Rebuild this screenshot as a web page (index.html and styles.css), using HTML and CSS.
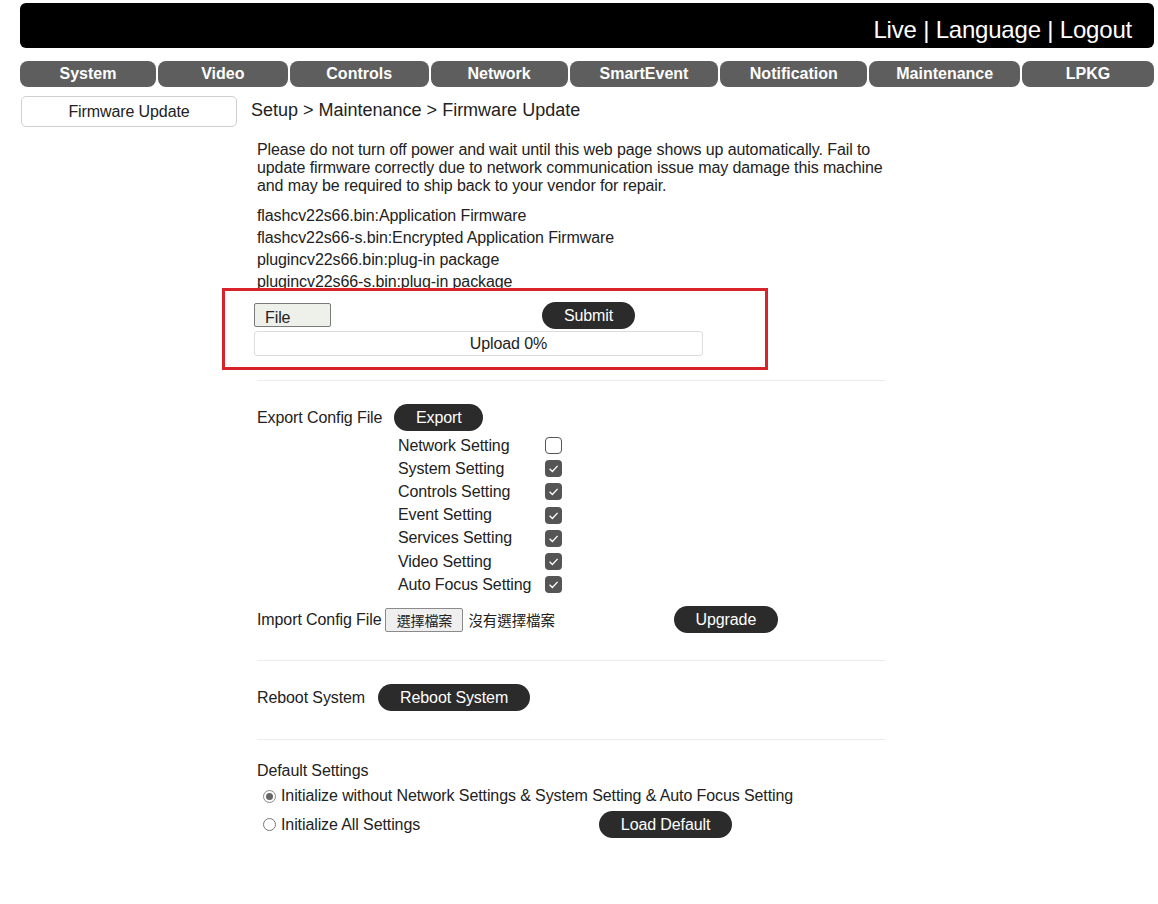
FILE: index.html
```html
<!DOCTYPE html>
<html>
<head>
<meta charset="utf-8">
<title>Firmware Update</title>
<link rel="stylesheet" href="styles.css">
</head>
<body>
<div class="page">
  <header class="topbar">
    <span class="toplinks">Live | Language | Logout</span>
  </header>
  <nav class="tabs">
    <a class="tab t1">System</a>
    <a class="tab t2">Video</a>
    <a class="tab t3">Controls</a>
    <a class="tab t4">Network</a>
    <a class="tab t5">SmartEvent</a>
    <a class="tab t6">Notification</a>
    <a class="tab t7">Maintenance</a>
    <a class="tab t8">LPKG</a>
  </nav>
  <div class="main">
    <aside class="side">
      <div class="side-item">Firmware Update</div>
    </aside>
    <section class="panel">
      <div class="crumb">Setup &gt; Maintenance &gt; Firmware Update</div>
      <div class="content">
        <p class="warn">Please do not turn off power and wait until this web page shows up automatically. Fail to update firmware correctly due to network communication issue may damage this machine and may be required to ship back to your vendor for repair.</p>
        <ul class="files">
          <li>flashcv22s66.bin:Application Firmware</li>
          <li>flashcv22s66-s.bin:Encrypted Application Firmware</li>
          <li>plugincv22s66.bin:plug-in package</li>
          <li>plugincv22s66-s.bin:plug-in package</li>
        </ul>
        <div class="upload">
          <div class="upload-row">
            <span class="file-btn">File</span>
            <span class="btn submit">Submit</span>
          </div>
          <div class="progress">Upload 0%</div>
          <div class="highlight"></div>
        </div>
        <hr class="sep sep1">
        <div class="row export-row">
          <span class="label">Export Config File</span>
          <span class="btn export">Export</span>
        </div>
        <div class="checks">
          <span class="ck-label">Network Setting</span><span class="ck"></span>
          <span class="ck-label">System Setting</span><span class="ck on"><svg viewBox="0 0 17 17"><path d="M4.6 8.7l2.8 2.8 5.2-5.6" fill="none" stroke="#fff" stroke-width="1.3"/></svg></span>
          <span class="ck-label">Controls Setting</span><span class="ck on"><svg viewBox="0 0 17 17"><path d="M4.6 8.7l2.8 2.8 5.2-5.6" fill="none" stroke="#fff" stroke-width="1.3"/></svg></span>
          <span class="ck-label">Event Setting</span><span class="ck on"><svg viewBox="0 0 17 17"><path d="M4.6 8.7l2.8 2.8 5.2-5.6" fill="none" stroke="#fff" stroke-width="1.3"/></svg></span>
          <span class="ck-label">Services Setting</span><span class="ck on"><svg viewBox="0 0 17 17"><path d="M4.6 8.7l2.8 2.8 5.2-5.6" fill="none" stroke="#fff" stroke-width="1.3"/></svg></span>
          <span class="ck-label">Video Setting</span><span class="ck on"><svg viewBox="0 0 17 17"><path d="M4.6 8.7l2.8 2.8 5.2-5.6" fill="none" stroke="#fff" stroke-width="1.3"/></svg></span>
          <span class="ck-label">Auto Focus Setting</span><span class="ck on"><svg viewBox="0 0 17 17"><path d="M4.6 8.7l2.8 2.8 5.2-5.6" fill="none" stroke="#fff" stroke-width="1.3"/></svg></span>
        </div>
        <div class="row import-row">
          <span class="label">Import Config File</span>
          <span class="choose">選擇檔案</span>
          <span class="nofile">沒有選擇檔案</span>
          <span class="btn upgrade">Upgrade</span>
        </div>
        <hr class="sep sep2">
        <div class="row reboot-row">
          <span class="label">Reboot System</span>
          <span class="btn reboot">Reboot System</span>
        </div>
        <hr class="sep sep3">
        <div class="defaults-title">Default Settings</div>
        <div class="radio-row r1">
          <span class="radio on"></span>
          <span>Initialize without Network Settings &amp; System Setting &amp; Auto Focus Setting</span>
        </div>
        <div class="radio-row r2">
          <span class="radio"></span>
          <span>Initialize All Settings</span>
          <span class="btn loaddef">Load Default</span>
        </div>
      </div>
    </section>
  </div>
</div>
</body>
</html>
```
FILE: styles.css
```css
* { box-sizing: border-box; }
html, body { margin: 0; padding: 0; background: #fff; }
body {
  font-family: "Liberation Sans", Arial, sans-serif;
  font-size: 16px;
  letter-spacing: -0.1px;
  color: #222;
}
.page { padding: 3px 4px 0 20px; width: 1158px; }

.topbar {
  height: 45px;
  background: #000;
  border-radius: 6px;
  display: flex;
  justify-content: flex-end;
  align-items: center;
  padding-right: 22px;
}
.toplinks { color: #fff; font-size: 24px; letter-spacing: -0.2px; padding-top: 8px; }

.tabs {
  display: flex;
  gap: 2px;
  margin-top: 13px;
}
.tab {
  height: 26px;
  background: #5e5e5e;
  color: #fff;
  font-weight: bold;
  font-size: 16px;
  letter-spacing: 0;
  border-radius: 8px;
  display: flex;
  align-items: center;
  justify-content: center;
}
.t1 { width: 136px; }
.t2 { width: 130px; }
.t3 { width: 139px; }
.t4 { width: 137px; }
.t5 { width: 149px; }
.t6 { width: 147px; }
.t7 { width: 151px; }
.t8 { width: 132px; }

.main { display: flex; margin-top: 9px; }
.side { width: 231px; padding-left: 1px; }
.side-item {
  width: 216px;
  height: 31px;
  border: 1.5px solid #cfcfcf;
  border-radius: 5px;
  display: flex;
  align-items: center;
  justify-content: center;
  font-size: 16px;
  color: #222;
}
.panel { flex: 1; }
.crumb { font-size: 18px; line-height: 28px; color: #222; letter-spacing: 0; }
.content { padding-left: 6px; width: 636px; }

.warn { margin: 17px 0 0; line-height: 18px; font-size: 16px; }
.files { list-style: none; margin: 10px 0 0; padding: 0; }
.files li { line-height: 22px; }

.upload { position: relative; margin-left: -3px; margin-top: 9px; }
.upload-row { display: flex; align-items: flex-start; height: 27px; }
.file-btn {
  margin-top: 1px;
  width: 77px;
  height: 24px;
  background: #eef0ea;
  border: 1px solid #7a7a7a;
  border-radius: 2px;
  padding: 4px 0 0 10px;
  font-size: 16px;
  line-height: 20px;
}
.btn {
  display: inline-flex;
  align-items: center;
  justify-content: center;
  height: 27px;
  background: #2b2b2b;
  color: #fff;
  border-radius: 14px;
  font-size: 16px;
}
.submit { width: 93px; margin-left: 211px; }
.progress {
  margin-top: 2px;
  width: 449px;
  height: 25px;
  border: 1px solid #dcdcdc;
  border-radius: 3px;
  display: flex;
  align-items: center;
  justify-content: center;
  padding-left: 60px;
}
.highlight {
  position: absolute;
  left: -32px;
  top: -14px;
  width: 546px;
  height: 82px;
  border: 3px solid #d8232b;
}

.sep { border: 0; border-top: 1px solid #ececec; margin: 0; width: 629px; }
.sep1 { margin-top: 24px; }
.row { display: flex; align-items: center; height: 27px; }
.export-row { margin-top: 23px; }
.label { color: #222; }
.export { width: 89px; margin-left: 12px; }

.checks {
  margin-top: 3px;
  margin-left: 141px;
  display: grid;
  grid-template-columns: 147px 17px;
  grid-auto-rows: 23.2px;
  align-items: center;
}
.ck {
  width: 17px;
  height: 17px;
  border: 1.3px solid #555;
  border-radius: 4px;
  display: block;
  overflow: hidden;
}
.ck.on { background: #555; border: 0; }
.ck svg { display: block; width: 17px; height: 17px; }

.import-row { margin-top: 10px; }
.choose {
  margin-left: 4px;
  width: 78px;
  height: 24px;
  border: 1px solid #8a8a8a;
  background: #efefef;
  border-radius: 2px;
  display: inline-flex;
  align-items: center;
  justify-content: center;
  font-family: "Noto Sans CJK TC", sans-serif;
  font-size: 14px;
  color: #222;
}
.nofile { margin-left: 5px; font-family: "Noto Sans CJK TC", sans-serif; font-size: 14.5px; }
.upgrade { width: 104px; margin-left: 119px; }

.sep2 { margin-top: 27px; }
.reboot-row { margin-top: 23px; }
.reboot { width: 152px; margin-left: 13px; }
.sep3 { margin-top: 28px; }

.defaults-title { margin-top: 21px; line-height: 20px; }
.radio-row { display: flex; align-items: center; padding-left: 6px; }
.r1 { height: 22px; margin-top: 4px; }
.r2 { height: 27px; margin-top: 4px; }
.radio {
  width: 13px;
  height: 13px;
  border: 1px solid #777;
  border-radius: 50%;
  margin-right: 5px;
  position: relative;
  flex: none;
}
.radio.on { border-color: #888; }
.radio.on::after {
  content: "";
  position: absolute;
  left: 2px; top: 2px;
  width: 7px; height: 7px;
  border-radius: 50%;
  background: #666;
}
.loaddef { width: 133px; margin-left: 179px; }
```
